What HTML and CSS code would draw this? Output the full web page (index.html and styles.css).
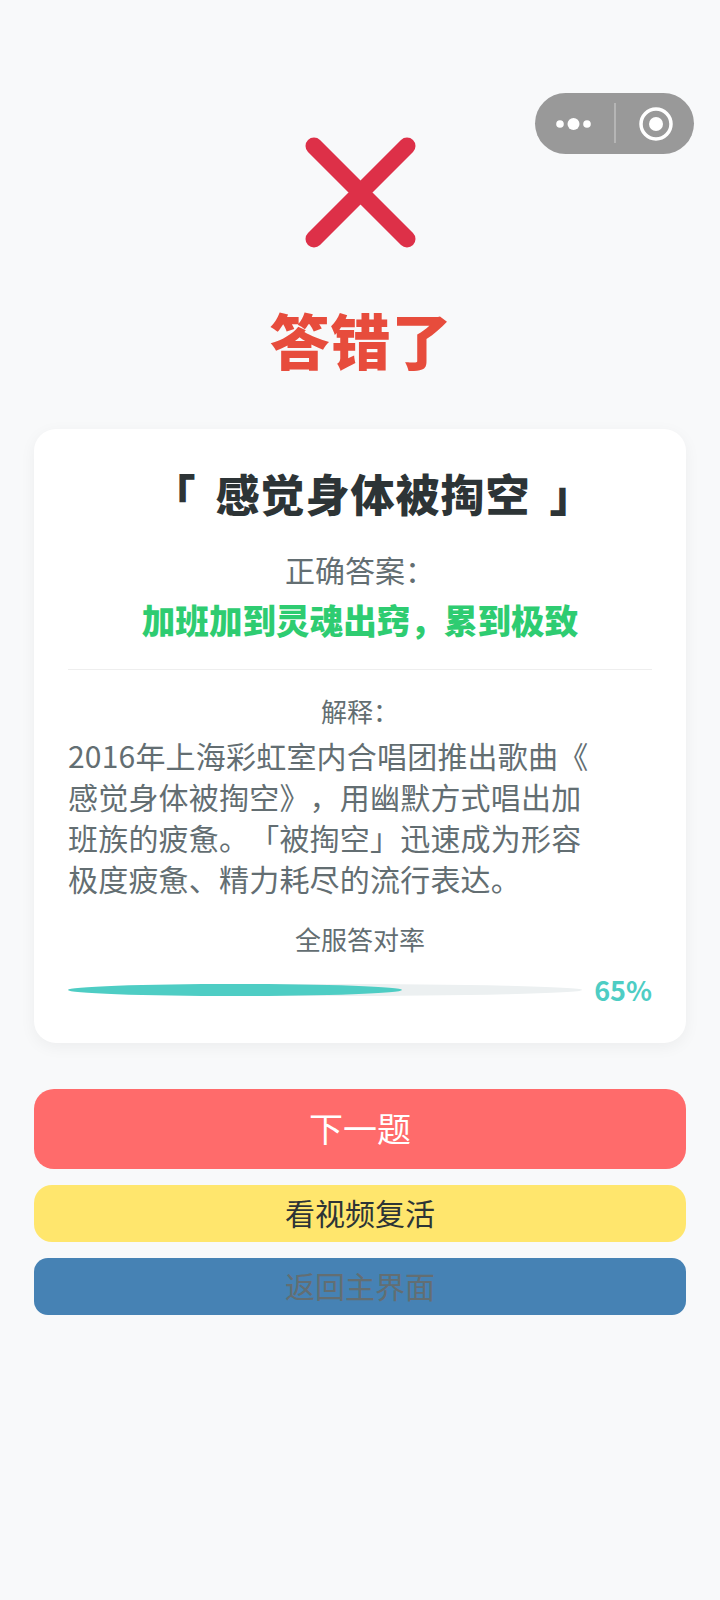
FILE: index.html
```html
<!DOCTYPE html>
<html lang="zh-CN">
<head>
<meta charset="utf-8">
<title>答错了</title>
<link rel="stylesheet" href="styles.css">
</head>
<body>
<div class="capsule">
  <svg class="capsule-icon" width="159" height="61" viewBox="0 0 159 61" aria-hidden="true">
    <circle cx="25" cy="31" r="3.800" fill="#fff"/>
    <circle cx="38.500" cy="31" r="6" fill="#fff"/>
    <circle cx="52" cy="31" r="3.800" fill="#fff"/>
    <rect x="79" y="10" width="2" height="40" fill="#b5b5b5"/>
    <circle cx="121" cy="31" r="15" fill="none" stroke="#fff" stroke-width="3.500"/>
    <circle cx="121" cy="31" r="7" fill="#fff"/>
  </svg>
</div>
<main class="page">
  <svg class="cross" width="111" height="111" viewBox="0 0 111 111" aria-hidden="true">
    <path d="M9 9 L102 102 M102 9 L9 102" stroke="#dd3048" stroke-width="17" stroke-linecap="round" fill="none"/>
  </svg>
  <h1 class="result">答错了</h1>
  <section class="card">
    <h2 class="question">「 感觉身体被掏空 」</h2>
    <p class="answer-label">正确答案&#xFF1A;</p>
    <p class="answer">加班加到灵魂出窍&#xFF0C;累到极致</p>
    <hr class="divider">
    <p class="explain-label">解释&#xFF1A;</p>
    <p class="explain">2016年上海彩虹室内合唱团推出歌曲《感觉身体被掏空》&#xFF0C;用幽默方式唱出加班族的疲惫。「被掏空」迅速成为形容极度疲惫、精力耗尽的流行表达。</p>
    <p class="rate-label">全服答对率</p>
    <div class="rate">
      <div class="track"><div class="fill" style="width:65%"></div></div>
      <span class="percent">65%</span>
    </div>
  </section>
  <div class="actions">
    <button class="btn btn-next">下一题</button>
    <button class="btn btn-revive">看视频复活</button>
    <button class="btn btn-home">返回主界面</button>
  </div>
</main>
</body>
</html>
```
FILE: styles.css
```css
* { box-sizing: border-box; }
html, body { margin: 0; padding: 0; }
body {
  width: 720px;
  height: 1600px;
  overflow: hidden;
  background: #f8f9fa;
  font-family: "Noto Sans CJK SC", "Noto Sans", sans-serif;
  text-spacing-trim: space-all;
  position: relative;
}
.capsule {
  position: absolute;
  left: 535px;
  top: 93px;
  width: 159px;
  height: 61px;
  border-radius: 31px;
  background: #999999;
}
.capsule-icon { display: block; }
.page {
  display: flex;
  flex-direction: column;
  align-items: center;
  padding: 137px 34px 0;
}
.cross { display: block; }
.result {
  margin: 49px 0 0;
  padding-left: 2px;
  font-size: 60px;
  line-height: 84px;
  font-weight: 900;
  letter-spacing: 1px;
  color: #e74c3c;
}
.card {
  width: 652px;
  height: 614px;
  margin-top: 48px;
  padding: 34px 34px 0;
  background: #fff;
  border-radius: 22px;
  box-shadow: 0 4px 16px rgba(0, 0, 0, 0.05);
  text-align: center;
}
.question {
  margin: 0;
  padding-left: 26px;
  font-size: 44px;
  line-height: 60px;
  font-weight: 900;
  letter-spacing: 1px;
  word-spacing: 8px;
  color: #2d3436;
}
.answer-label {
  margin: 25px 0 0;
  font-size: 30px;
  line-height: 42px;
  color: #636e72;
}
.answer {
  margin: 6px 0 0;
  font-size: 33.600px;
  line-height: 48px;
  font-weight: 900;
  color: #2ecc71;
}
.divider {
  margin: 25px 0 0;
  border: 0;
  height: 1px;
  background: #eeeeee;
}
.explain-label {
  margin: 23px 0 0;
  font-size: 26px;
  line-height: 36px;
  color: #636e72;
}
.explain {
  margin: 6px 0 0;
  width: 530px;
  font-size: 30px;
  line-height: 41px;
  letter-spacing: 0.2px;
  line-break: anywhere;
  text-align: left;
  color: #636e72;
}
.rate-label {
  margin: 22px 0 0;
  font-size: 26px;
  line-height: 36px;
  color: #636e72;
}
.rate {
  display: flex;
  align-items: center;
  gap: 12px;
  margin-top: 15px;
}
.track {
  flex: 1;
  height: 12px;
  border-radius: 50%;
  background: #ecf0f1;
}
.fill {
  height: 100%;
  border-radius: 50%;
  background: #4ecdc4;
}
.percent {
  font-size: 27px;
  line-height: 36px;
  font-weight: 700;
  color: #4ecdc4;
}
.actions {
  display: flex;
  flex-direction: column;
  gap: 16px;
  width: 652px;
  margin-top: 46px;
}
.btn {
  display: block;
  width: 100%;
  border: 0;
  padding: 0 0 4px;
  font-family: inherit;
}
.btn-next {
  height: 80px;
  border-radius: 20px;
  background: #ff6b6b;
  color: #fff;
  font-size: 34px;
}
.btn-revive {
  height: 57px;
  border-radius: 18px;
  background: #ffe66d;
  color: #2d3436;
  font-size: 30px;
}
.btn-home {
  height: 57px;
  border-radius: 14px;
  background: #4682b4;
  color: #636e72;
  font-size: 30px;
}
```
